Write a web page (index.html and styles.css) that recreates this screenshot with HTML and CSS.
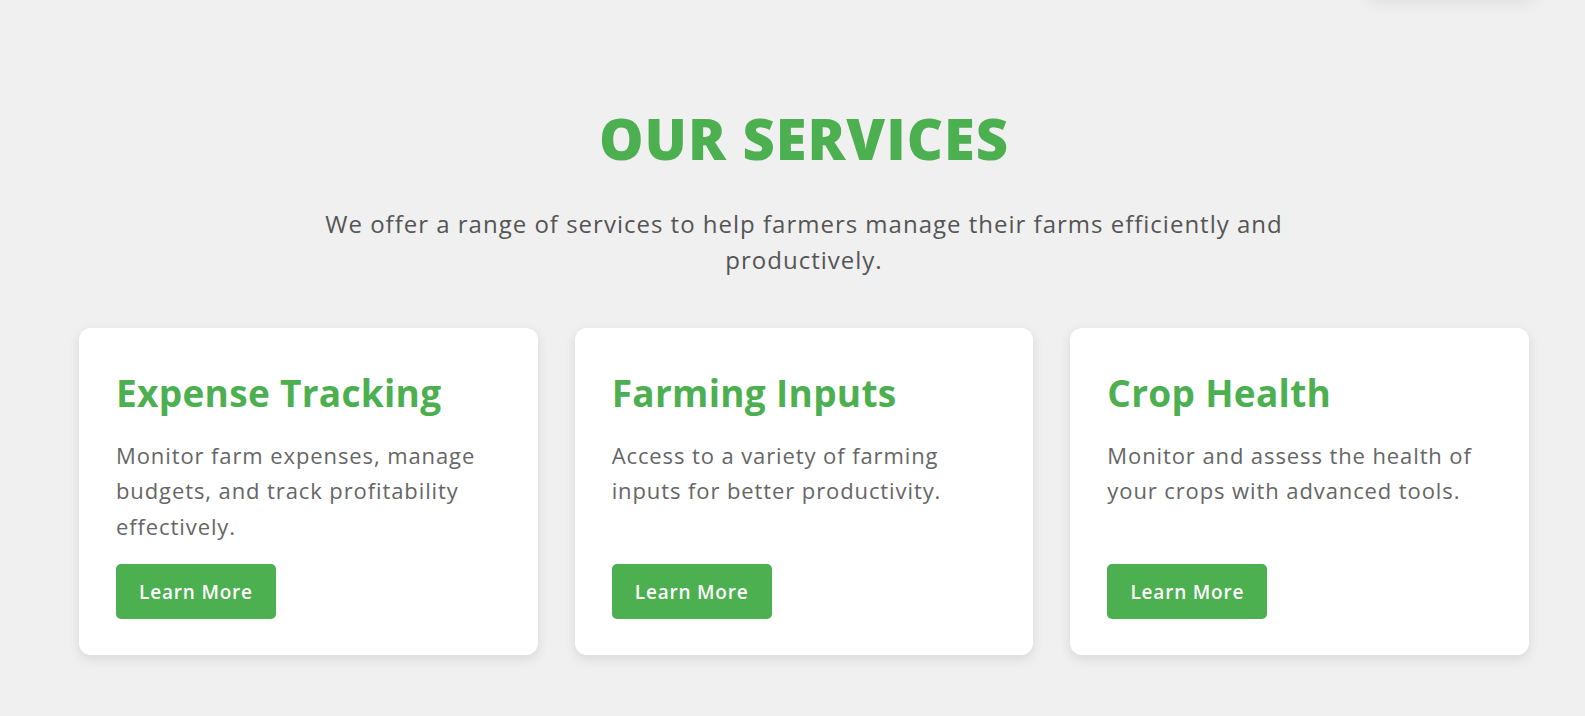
FILE: index.html
```html
<!DOCTYPE html>
<html lang="en">
<head>
<meta charset="utf-8">
<title>Our Services</title>
<link rel="stylesheet" href="styles.css">
</head>
<body>
<div class="ghost-menu"></div>
<section class="services">
  <h2 class="services-title">OUR SERVICES</h2>
  <p class="services-intro">We offer a range of services to help farmers manage their farms efficiently and productively.</p>
  <div class="service-grid">
    <article class="service-card">
      <h3 class="card-title">Expense Tracking</h3>
      <p class="card-text">Monitor farm expenses, manage budgets, and track profitability effectively.</p>
      <a class="card-btn" href="#">Learn More</a>
    </article>
    <article class="service-card">
      <h3 class="card-title">Farming Inputs</h3>
      <p class="card-text">Access to a variety of farming inputs for better productivity.</p>
      <a class="card-btn" href="#">Learn More</a>
    </article>
    <article class="service-card">
      <h3 class="card-title">Crop Health</h3>
      <p class="card-text">Monitor and assess the health of your crops with advanced tools.</p>
      <a class="card-btn" href="#">Learn More</a>
    </article>
  </div>
</section>
</body>
</html>
```

FILE: styles.css
```css
* { box-sizing: border-box; }
html, body { margin: 0; padding: 0; }
body {
  background: #f0f0f0;
  font-family: "Open Sans", "DejaVu Sans", sans-serif;
  color: #555;
  overflow: hidden;
  position: relative;
  height: 716px;
}
.ghost-menu {
  position: absolute;
  top: -60px;
  left: 1368px;
  width: 166px;
  height: 60px;
  background: #f0f0f0;
  box-shadow: 0 3px 14px rgba(0,0,0,0.07);
}
.services {
  padding: 103px 56px 0 79px;
  text-align: center;
}
.services-title {
  margin: 0;
  font-size: 56px;
  line-height: 70px;
  font-weight: 800;
  color: #4caf50;
  letter-spacing: 1px;
}
.services-intro {
  max-width: 1010px;
  margin: 33px auto 0;
  font-size: 24px;
  line-height: 36.4px;
  letter-spacing: 1px;
  color: #555;
}
.service-grid {
  display: grid;
  grid-template-columns: repeat(3, 1fr);
  gap: 37px;
  margin-top: 49px;
  text-align: left;
}
.service-card {
  background: #fff;
  border-radius: 12px;
  box-shadow: 0 4px 12px rgba(0,0,0,0.1);
  padding: 40px 37px 36px;
  display: flex;
  flex-direction: column;
}
.card-title {
  margin: 0;
  font-size: 37px;
  line-height: 50px;
  font-weight: 700;
  color: #4caf50;
  letter-spacing: 0.3px;
}
.card-text {
  margin: 20px 0 20px;
  font-size: 22px;
  line-height: 35.4px;
  letter-spacing: 0.9px;
  color: #666;
  flex: 1;
}
.card-btn {
  align-self: flex-start;
  display: inline-flex;
  align-items: center;
  justify-content: center;
  width: 160px;
  height: 55px;
  background: #4caf50;
  color: #fff;
  text-decoration: none;
  border-radius: 5px;
  font-size: 19px;
  font-weight: 600;
  letter-spacing: 0.8px;
}
```
